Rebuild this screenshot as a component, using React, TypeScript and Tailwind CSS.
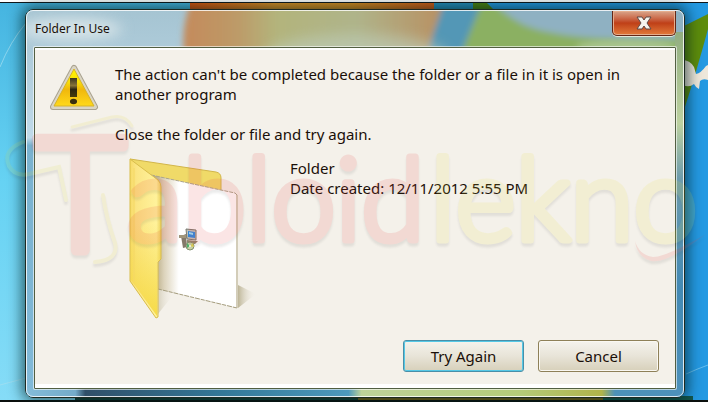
import { ReactNode } from 'react';

interface DialogButtonProps {
  children: ReactNode;
  primary?: boolean;
}

const Desktop = () => (
  <svg
    aria-hidden="true"
    className="absolute inset-0 h-full w-full"
    viewBox="0 0 708 402"
    preserveAspectRatio="none"
  >
    <defs>
      <linearGradient id="sky-left" x1="0" y1="0" x2="0" y2="1">
        <stop offset="0" stopColor="#45b4e0" />
        <stop offset="0.45" stopColor="#66d2f3" />
        <stop offset="1" stopColor="#86dcf7" />
      </linearGradient>
      <linearGradient id="flame" x1="0" y1="0" x2="1" y2="0">
        <stop offset="0" stopColor="#dc5209" />
        <stop offset="0.35" stopColor="#dd9223" />
        <stop offset="0.65" stopColor="#dc901f" />
        <stop offset="1" stopColor="#d85c13" />
      </linearGradient>
    </defs>
    <rect width="708" height="402" fill="#2499e2" />
    <rect width="350" height="402" fill="url(#sky-left)" />
    <path d="M0 67 Q10 42 26 23M0 385 L26 378" stroke="#a5def0" strokeWidth="1" fill="none" opacity="0.7" />
    <path d="M686 374 Q697 369 708 365" stroke="#65bdee" strokeWidth="1" fill="none" />
    <rect x="190" width="245" height="12" fill="url(#flame)" />
    <rect x="434" width="39" height="12" fill="#258fbd" />
    <path d="M473 0H484L496 12H473z" fill="#4d8310" />
    <path d="M680 28 L708 14 V29 Q697 70 683 113z" fill="#5d8c0c" />
    <path
      d="M682 60 Q690 60 694 67 L696 74 Q701 73 706 66 L708 65 V80 Q703 78 700 81 L699 89 Q696 88 694 84 Q689 88 683 85z"
      fill="#eee7da"
    />
    <rect x="75" y="396" width="285" height="6" fill="#173e36" />
    <rect x="358" y="396" width="246" height="6" fill="#7d6414" />
    <rect x="603" y="396" width="90" height="6" fill="#14584d" />
    <rect width="708" height="2" fill="#ffffff" />
    <rect y="2" width="708" height="1" fill="#10181c" />
    <rect y="400" width="708" height="2" fill="#0b100e" />
  </svg>
);

const GlassFrame = () => (
  <svg
    aria-hidden="true"
    className="absolute inset-0 h-full w-full"
    viewBox="0 0 658 387"
    preserveAspectRatio="none"
  >
    <defs>
      <filter id="soften" x="-20%" y="-20%" width="140%" height="140%">
        <feGaussianBlur stdDeviation="3" />
      </filter>
      <filter id="halo" x="-30%" y="-60%" width="160%" height="220%">
        <feGaussianBlur stdDeviation="7" />
      </filter>
      <linearGradient id="glass-left" x1="0" y1="0" x2="0" y2="1">
        <stop offset="0" stopColor="#a5c4d2" />
        <stop offset="0.33" stopColor="#c0dae9" />
        <stop offset="0.35" stopColor="#79b2cf" />
        <stop offset="1" stopColor="#81b9d8" />
      </linearGradient>
      <linearGradient id="glass-flame" x1="0" y1="0" x2="1" y2="0">
        <stop offset="0" stopColor="#c48a5b" />
        <stop offset="0.2" stopColor="#bd9a68" />
        <stop offset="0.35" stopColor="#b3b47c" />
        <stop offset="0.65" stopColor="#afb48a" />
        <stop offset="1" stopColor="#b98d5f" />
      </linearGradient>
      <linearGradient id="glass-right" x1="0" y1="0" x2="0" y2="1">
        <stop offset="0" stopColor="#91ad80" />
        <stop offset="0.25" stopColor="#bdd1a0" />
        <stop offset="0.4" stopColor="#6e9cac" />
        <stop offset="0.7" stopColor="#438ab4" />
        <stop offset="1" stopColor="#4d91ba" />
      </linearGradient>
      <linearGradient id="glass-bottom" x1="0" y1="0" x2="1" y2="0">
        <stop offset="0" stopColor="#84bcd9" />
        <stop offset="0.075" stopColor="#74abc9" />
        <stop offset="0.09" stopColor="#304f68" />
        <stop offset="0.3" stopColor="#337898" />
        <stop offset="0.49" stopColor="#4d99bc" />
        <stop offset="0.51" stopColor="#bed29a" />
        <stop offset="0.75" stopColor="#b4cb79" />
        <stop offset="0.875" stopColor="#b0b34a" />
        <stop offset="0.895" stopColor="#4c91b8" />
        <stop offset="1" stopColor="#4d91ba" />
      </linearGradient>
    </defs>
    <rect width="658" height="387" fill="#87abbf" />
    <rect width="200" height="387" fill="url(#glass-left)" />
    <g filter="url(#soften)">
      <path d="M165 -8H424L406 46H158Q155 16 165 -8z" fill="url(#glass-flame)" />
      <path d="M418 -8H458L434 46H400z" fill="#5297b6" />
      <path d="M456 -8H680V46H434z" fill="#8bb062" />
      <path d="M466 -8H680V28Q540 34 496 14Q478 4 466 -8z" fill="#8fb1c2" />
    </g>
    <ellipse cx="330" cy="46" rx="90" ry="22" fill="#bccab4" opacity="0.7" filter="url(#halo)" />
    <ellipse cx="600" cy="36" rx="50" ry="6" fill="#b0ca9a" opacity="0.8" filter="url(#soften)" />
    <ellipse cx="44" cy="19" rx="52" ry="11" fill="#dce7ea" opacity="0.9" filter="url(#halo)" />
    <rect x="649" y="22" width="9" height="365" fill="url(#glass-right)" />
    <rect y="378" width="658" height="9" fill="url(#glass-bottom)" />
  </svg>
);

const WarningIcon = () => (
  <svg role="img" aria-label="Warning" className="h-12 w-[50px] shrink-0" viewBox="0 0 50 48">
    <defs>
      <linearGradient id="warn-fill" x1="0" y1="0" x2="0" y2="1">
        <stop offset="0" stopColor="#fff500" />
        <stop offset="0.35" stopColor="#f9df08" />
        <stop offset="0.55" stopColor="#f0b70c" />
        <stop offset="1" stopColor="#ffd91a" />
      </linearGradient>
      <linearGradient id="warn-mark" x1="0" y1="0" x2="0" y2="1">
        <stop offset="0" stopColor="#39341f" />
        <stop offset="0.4" stopColor="#877339" />
        <stop offset="0.6" stopColor="#2b2511" />
        <stop offset="1" stopColor="#463a0a" />
      </linearGradient>
    </defs>
    <path d="M25 4L46 43H4z" fill="#a9a28f" stroke="#a9a28f" strokeWidth="6" strokeLinejoin="round" />
    <path d="M25 4L46 43H4z" fill="#dad5c4" stroke="#dad5c4" strokeWidth="4" strokeLinejoin="round" />
    <path d="M25 5L45 42H5z" fill="url(#warn-fill)" stroke="#d6b32a" strokeWidth="1" strokeLinejoin="round" />
    <rect x="21" y="14" width="7" height="19" fill="url(#warn-mark)" />
    <ellipse cx="24.5" cy="37.5" rx="3.5" ry="2.7" fill="#3a300f" />
  </svg>
);

const FolderIcon = () => (
  <svg aria-hidden="true" className="h-[168px] w-[132px] shrink-0" viewBox="128 154 132 168">
    <defs>
      <linearGradient id="folder-front" x1="0" y1="0" x2="1" y2="0">
        <stop offset="0" stopColor="#f7db67" />
        <stop offset="0.2" stopColor="#fbe584" />
        <stop offset="0.85" stopColor="#fff29b" />
        <stop offset="1" stopColor="#ecd25f" />
      </linearGradient>
      <linearGradient id="folder-tint" x1="0" y1="0" x2="0" y2="1">
        <stop offset="0.4" stopColor="#f5d83f" stopOpacity="0" />
        <stop offset="1" stopColor="#f5d83f" stopOpacity="0.9" />
      </linearGradient>
      <linearGradient id="paper" x1="0" y1="0" x2="1" y2="0">
        <stop offset="0.05" stopColor="#b9ac86" />
        <stop offset="0.15" stopColor="#dcd3bb" />
        <stop offset="0.32" stopColor="#ffffff" />
      </linearGradient>
      <linearGradient id="folder-shadow" x1="0" y1="0" x2="1" y2="0">
        <stop offset="0" stopColor="#bdb597" />
        <stop offset="1" stopColor="#f4f1ea" stopOpacity="0" />
      </linearGradient>
    </defs>
    <path d="M238 285L256 294L238 308z" fill="url(#folder-shadow)" />
    <path d="M157 288L174 294L158 314z" fill="url(#folder-shadow)" opacity="0.6" />
    <path d="M130 159L216 172Q221 173 221 178V212L152 178z" fill="#f0da68" stroke="#d2b64a" strokeWidth="1" />
    <path d="M151 175L235 193L238 196V308L158 289z" fill="url(#paper)" />
    <path d="M151 175L235 193L238 196" fill="none" stroke="#aba58e" strokeWidth="1" strokeDasharray="4 1" />
    <path d="M237 195V308" fill="none" stroke="#d3cdb9" strokeWidth="2" />
    <path d="M158 289L237 308" fill="none" stroke="#a49c7d" strokeWidth="1" strokeDasharray="4 1 5 1" />
    <path d="M130 159L158 180Q161 183 161 187V259L158 262V317L156 318L130 281z" fill="url(#folder-front)" stroke="#d9bd4b" strokeWidth="1" />
    <path d="M131 161L158 182Q160 184 160 187V259L157 262V316L131 280z" fill="url(#folder-tint)" />
    <path d="M134 168V282" stroke="#f5d867" strokeWidth="1" />
    <g>
      <path d="M181 236L186 234L187 247L183 248z" fill="#84796a" />
      <path d="M179 235H188V238H179z" fill="#a09479" />
      <path d="M186 229L196 230V240L187 239z" fill="#c2c4bc" stroke="#78776d" />
      <path d="M188 231L195 232V238L188 237z" fill="#2a8be4" />
      <path d="M189 232L193 233V235L189 234z" fill="#98e4fb" />
      <path d="M187 240L198 241L195 244L187 243z" fill="#8f856e" />
      <circle cx="190" cy="246" r="4" fill="#c9d1a5" stroke="#839071" />
      <path d="M187 243L190 246L187 248z" fill="#4db16a" />
      <path d="M190 246L193 243L194 247z" fill="#e6d454" />
      <circle cx="190" cy="246" r="1" fill="#f9fcf5" />
    </g>
  </svg>
);

const Watermark = () => (
  <svg
    className="pointer-events-none absolute inset-0 h-full w-full"
    viewBox="0 0 708 402"
    style={{ filter: 'drop-shadow(0 3px 1px rgba(70, 70, 70, 0.8))' }}
    opacity="0.13"
  >
    <g strokeLinejoin="round" className="font-['Lato'] font-light">
      <text x="35" y="250" fontSize="156" fill="#e84040" stroke="#e84040" strokeWidth="11">
        T
      </text>
      <g fontSize="115" strokeWidth="7">
        <text x="127" y="240" fill="#e84040" stroke="#e84040">abloid</text>
        <text x="430" y="240" fill="#e8e040" stroke="#e8e040">lekno</text>
      </g>
    </g>
    <g fill="none" strokeLinecap="round">
      <path d="M23 142Q2 150 9 166Q15 177 29 174L59 167L66 200" stroke="#d9db3f" strokeWidth="4" />
      <path d="M103 195Q106 217 115 243Q119 260 95 262" stroke="#e3da38" strokeWidth="4" />
      <path d="M72 127L112 117Q125 114 132 126" stroke="#e3da38" strokeWidth="3" />
    </g>
    <path d="M635 241Q639 255 653 257Q666 257 706 234Q667 264 651 261Q637 257 635 241z" fill="#e84040" />
  </svg>
);

const DialogButton: React.FC<DialogButtonProps> = ({ children, primary = false }) => (
  <button
    type="button"
    className={`h-8 w-[121px] rounded-[3px] border bg-linear-to-b from-[#f5f3ed] from-0% via-[#e8e4d8] via-50% to-[#d7d0ba] to-100% text-[15px] ${
      primary
        ? 'border-[#4a8fa8] shadow-[inset_0_0_0_1px_#55c8e6]'
        : 'border-[#8e8058] shadow-[inset_0_0_0_1px_#faf8f2]'
    }`}
  >
    {children}
  </button>
);

const CloseButton = () => (
  <button
    type="button"
    aria-label="Close"
    className="flex h-[25px] w-[64px] items-center justify-center rounded-b-[5px] border border-t-0 border-[#652616] bg-linear-to-b from-[#d8a58b] from-0% via-[#bf3f17] via-50% to-[#e27a3a] to-100% shadow-[inset_0_0_0_1px_#e5ad8d,0_1px_0_0_#e3e9d9]"
  >
    <svg aria-hidden="true" className="h-4 w-4" viewBox="0 0 16 16">
      <path
        d="M1 2H6L8 5L10 2H15L11 8L15 14H10L8 11L6 14H1L5 8z"
        fill="#f6f5ee"
        stroke="#5f4944"
        strokeWidth="1"
        strokeLinejoin="round"
      />
    </svg>
  </button>
);

const FolderInUseDialog = () => (
  <section
    role="dialog"
    aria-labelledby="dialog-title"
    className="relative flex flex-1 flex-col overflow-hidden rounded-lg border border-[#1d2a22] shadow-[0_0_14px_3px_rgba(0,30,30,0.65)]"
  >
    <GlassFrame />
    <div className="relative flex flex-1 flex-col rounded-[7px] border border-white/80 px-[7px] pb-[7px]">
      <header className="flex h-9 items-start justify-between">
        <h1 id="dialog-title" className="pt-[10px] pl-px text-xs leading-4">
          Folder In Use
        </h1>
        <CloseButton />
      </header>

      <div className="flex flex-1 flex-col rounded-[1px] border border-[#525f42] bg-[#f4f1ea] shadow-[0_0_0_1px_rgba(255,255,255,0.6),inset_0_2px_0_0_#ffffff,inset_0_-4px_0_0_#ffffff]">
        <div className="flex gap-4 px-[14px] pt-4">
          <WarningIcon />
          <div className="text-[15px] leading-5">
            <p>
              The action can't be completed because the folder or a file in it is open in
              <br />
              another program
            </p>
            <p className="mt-5">Close the folder or file and try again.</p>
          </div>
        </div>

        <div className="mt-[10px] flex gap-[30px] pl-[93px] text-[15px] leading-5">
          <FolderIcon />
          <div className="pt-1">
            <p>Folder</p>
            <p>Date created: 12/11/2012 5:55 PM</p>
          </div>
        </div>

        <footer className="mt-auto flex justify-end gap-[14px] pr-4 pb-4">
          <DialogButton primary>Try Again</DialogButton>
          <DialogButton>Cancel</DialogButton>
        </footer>
      </div>
    </div>
  </section>
);

const App = () => (
  <main className="relative flex min-h-screen overflow-hidden pt-[9px] pr-[23px] pb-1 pl-[25px] font-['Noto_Sans','Open_Sans',sans-serif] text-[#1a0f08]">
    <Desktop />
    <FolderInUseDialog />
    <Watermark />
  </main>
);

export default App;
